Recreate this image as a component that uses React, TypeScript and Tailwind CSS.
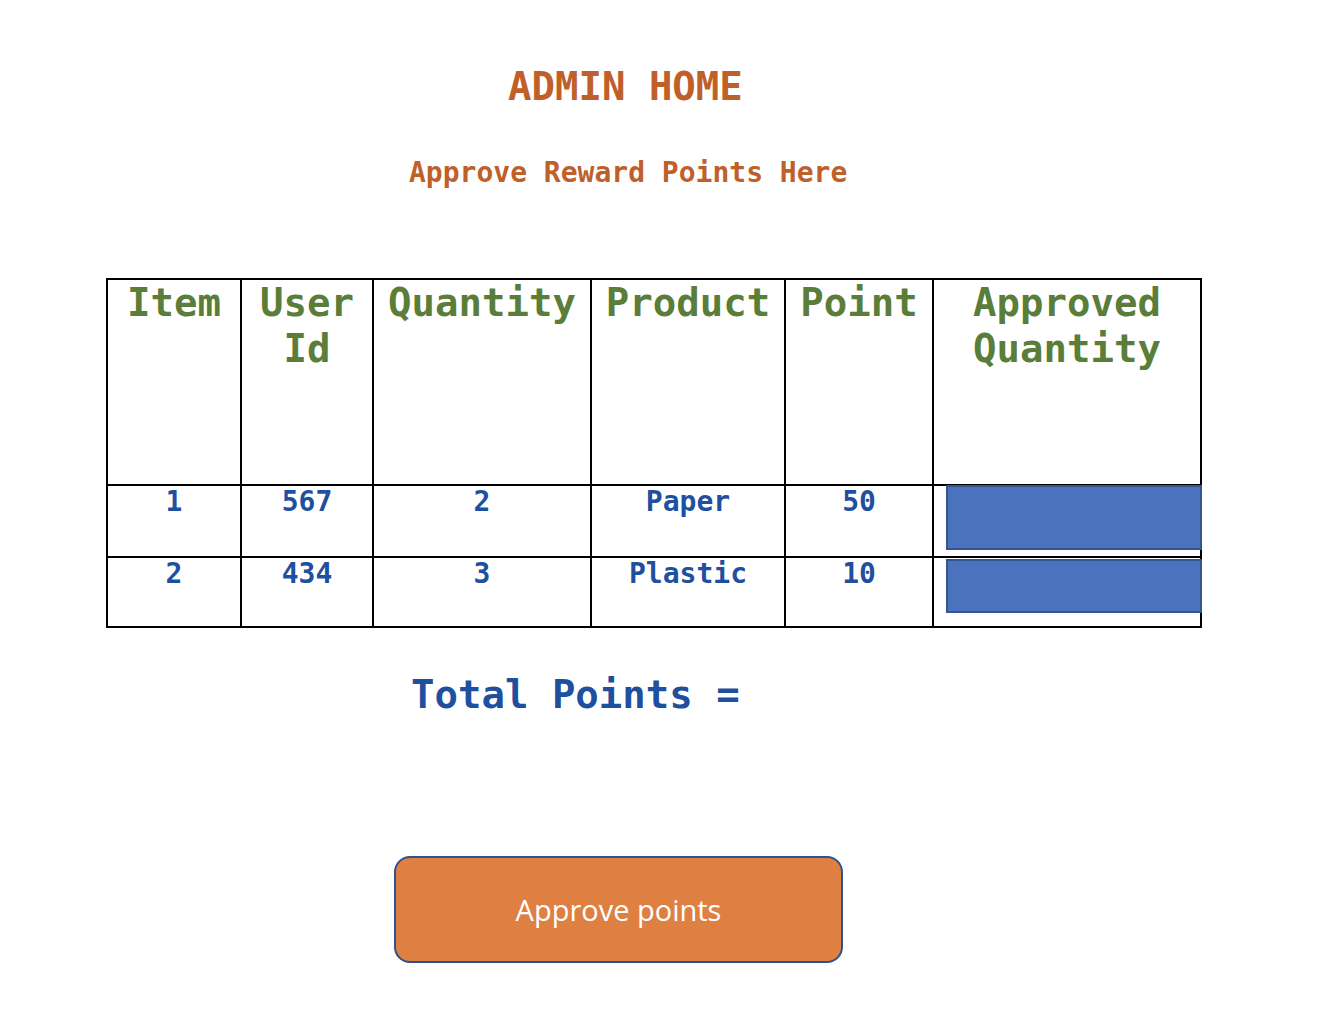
const mono = "font-['DejaVu_Sans_Mono',monospace] font-bold";

const rows = [
  { item: "1", user: "567", qty: "2", product: "Paper", point: "50", h: "h-[72px]", box: "h-[65px] -mt-[1px]" },
  { item: "2", user: "434", qty: "3", product: "Plastic", point: "10", h: "h-[70px]", box: "h-[54px] mt-[1px]" },
];

const widths = ["w-[134px]", "w-[132px]", "w-[218px]", "w-[194px]", "w-[148px]", "w-[268px]"];

function HeadCell({ w, children }: { w: string; children: React.ReactNode }) {
  return (
    <div className={`${w} h-[206px] border-r-2 border-b-2 border-black text-center text-[39px] leading-[46px] text-[#5a7d3a]`}>
      {children}
    </div>
  );
}

function Cell({ w, h, children }: { w: string; h: string; children?: React.ReactNode }) {
  return (
    <div className={`${w} ${h} border-r-2 border-b-2 border-black text-center text-[28px] leading-[32px] text-[#1f50a0]`}>
      {children}
    </div>
  );
}

export default function App() {
  return (
    <div className={`w-[1322px] h-[1024px] bg-white ${mono}`}>
      <div className="pt-[64px] pl-[508px] text-[39px] leading-[46px] text-[#bf602b]">ADMIN HOME</div>
      <div className="mt-[47px] pl-[409px] text-[28px] leading-[32px] text-[#bf602b]">Approve Reward Points Here</div>

      <div className="mt-[89px] ml-[106px] w-[1096px] border-l-2 border-t-2 border-black">
        <div className="flex">
          <HeadCell w={widths[0]}>Item</HeadCell>
          <HeadCell w={widths[1]}>User<br />Id</HeadCell>
          <HeadCell w={widths[2]}>Quantity</HeadCell>
          <HeadCell w={widths[3]}>Product</HeadCell>
          <HeadCell w={widths[4]}>Point</HeadCell>
          <HeadCell w={widths[5]}>Approved<br />Quantity</HeadCell>
        </div>
        {rows.map((r) => (
          <div key={r.item} className="flex">
            <Cell w={widths[0]} h={r.h}>{r.item}</Cell>
            <Cell w={widths[1]} h={r.h}>{r.user}</Cell>
            <Cell w={widths[2]} h={r.h}>{r.qty}</Cell>
            <Cell w={widths[3]} h={r.h}>{r.product}</Cell>
            <Cell w={widths[4]} h={r.h}>{r.point}</Cell>
            <Cell w={widths[5]} h={r.h}>
              <div className={`ml-[12px] w-[256px] ${r.box} bg-[#4a72bd] border-2 border-[#34558f]`} />
            </Cell>
          </div>
        ))}
      </div>

      <div className="mt-[45px] pl-[411px] text-[39px] leading-[44px] text-[#1f50a0]">Total Points =</div>

      <div className="mt-[139px] ml-[394px]">
        <button className="w-[449px] h-[107px] rounded-[16px] border-2 border-[#2f5090] bg-[#df8043] flex items-center justify-center font-['Open_Sans',sans-serif] font-normal text-[29px] text-white">
          Approve points
        </button>
      </div>
    </div>
  );
}
